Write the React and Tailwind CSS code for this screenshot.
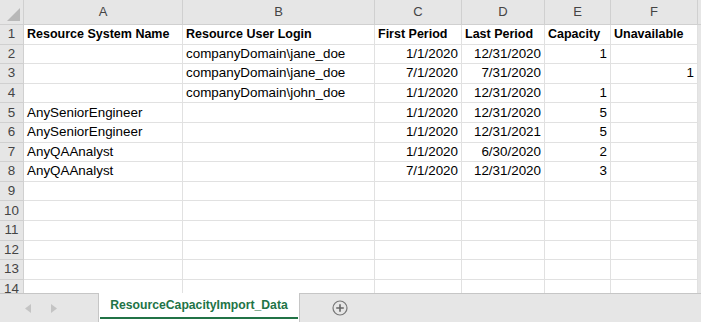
import React from 'react';

const cols = [
  { key: 'A', w: 159 },
  { key: 'B', w: 192 },
  { key: 'C', w: 87 },
  { key: 'D', w: 83 },
  { key: 'E', w: 66 },
  { key: 'F', w: 87 },
];

const rows = [
  [{ t: 'Resource System Name', b: 1 }, { t: 'Resource User Login', b: 1 }, { t: 'First Period', b: 1 }, { t: 'Last Period', b: 1 }, { t: 'Capacity', b: 1 }, { t: 'Unavailable', b: 1 }],
  [{}, { t: 'companyDomain\\jane_doe' }, { t: '1/1/2020', r: 1 }, { t: '12/31/2020', r: 1 }, { t: '1', r: 1 }, {}],
  [{}, { t: 'companyDomain\\jane_doe' }, { t: '7/1/2020', r: 1 }, { t: '7/31/2020', r: 1 }, {}, { t: '1', r: 1 }],
  [{}, { t: 'companyDomain\\john_doe' }, { t: '1/1/2020', r: 1 }, { t: '12/31/2020', r: 1 }, { t: '1', r: 1 }, {}],
  [{ t: 'AnySeniorEngineer' }, {}, { t: '1/1/2020', r: 1 }, { t: '12/31/2020', r: 1 }, { t: '5', r: 1 }, {}],
  [{ t: 'AnySeniorEngineer' }, {}, { t: '1/1/2020', r: 1 }, { t: '12/31/2021', r: 1 }, { t: '5', r: 1 }, {}],
  [{ t: 'AnyQAAnalyst' }, {}, { t: '1/1/2020', r: 1 }, { t: '6/30/2020', r: 1 }, { t: '2', r: 1 }, {}],
  [{ t: 'AnyQAAnalyst' }, {}, { t: '7/1/2020', r: 1 }, { t: '12/31/2020', r: 1 }, { t: '3', r: 1 }, {}],
];

const Cell = ({ c, w }) => (
  <div
    className={`h-full shrink-0 border-r border-b border-[#e1e1e1] px-[3px] flex items-center overflow-visible whitespace-nowrap ${c && c.r ? 'justify-end' : ''} ${c && c.b ? 'font-bold text-[12.5px]' : 'text-[13.4px]'}`}
    style={{ width: w }}
  >
    {c && c.t}
  </div>
);

export default function App() {
  const all = Array.from({ length: 14 }, (_, i) => rows[i] || []);
  return (
    <div className="w-[701px] h-[322px] overflow-hidden bg-white flex flex-col text-[#000]" style={{ fontFamily: '"Liberation Sans", Arial, sans-serif' }}>
      <div className="flex-1 overflow-hidden flex flex-col">
        {/* column header */}
        <div className="flex h-[25px] shrink-0 bg-[#e6e6e6] text-[#444] text-[13px]">
          <div className="w-[24px] shrink-0 h-full border-r border-b border-[#d0d0d0] relative">
            <svg className="absolute right-[3px] bottom-[3px]" width="13" height="13" viewBox="0 0 13 13">
              <polygon points="13,0 13,13 0,13" fill="#b8b8b8" />
            </svg>
          </div>
          {cols.map((c) => (
            <div key={c.key} className="shrink-0 h-full border-r border-b border-[#d0d0d0] flex items-center justify-center" style={{ width: c.w }}>
              {c.key}
            </div>
          ))}
          <div className="flex-1 h-full border-b border-[#d0d0d0]" />
        </div>
        {all.map((r, i) => (
          <div key={i} className="flex h-[19.6px] shrink-0">
            <div className="w-[24px] shrink-0 h-full bg-[#e6e6e6] border-r border-b border-[#d0d0d0] text-[#444] text-[13.4px] flex items-center justify-center">
              {i + 1}
            </div>
            {cols.map((c, j) => (
              <Cell key={c.key} c={r[j]} w={c.w} />
            ))}
            <div className="flex-1 h-full bg-[#e6e6e6]" />
          </div>
        ))}
      </div>
      {/* sheet tabs */}
      <div className="h-[29px] shrink-0 bg-[#e6e6e6] border-t border-[#c6c6c6] flex items-stretch">
        <div className="w-[98px] shrink-0 flex items-center gap-[18px] pl-[25px]">
          <svg width="7" height="9" viewBox="0 0 7 9"><polygon points="6,0 6,9 0,4.5" fill="#c4c4c4" /></svg>
          <svg width="7" height="9" viewBox="0 0 7 9"><polygon points="1,0 1,9 7,4.5" fill="#c4c4c4" /></svg>
        </div>
        <div className="w-[202px] shrink-0 -mt-px bg-white border-l border-r border-[#c6c6c6] flex flex-col">
          <div className="flex-1 flex items-center justify-center text-[#217346] font-bold text-[12.2px]">
            ResourceCapacityImport_Data
          </div>
          <div className="h-[2px] bg-[#217346] mx-[1px] mb-[3px]" />
        </div>
        <div className="flex items-center pl-[32px]">
          <svg width="16" height="16" viewBox="0 0 16 16">
            <circle cx="8" cy="8" r="7" fill="none" stroke="#777" strokeWidth="1.2" />
            <path d="M8 4.2v7.6M4.2 8h7.6" stroke="#666" strokeWidth="1.6" />
          </svg>
        </div>
      </div>
    </div>
  );
}
